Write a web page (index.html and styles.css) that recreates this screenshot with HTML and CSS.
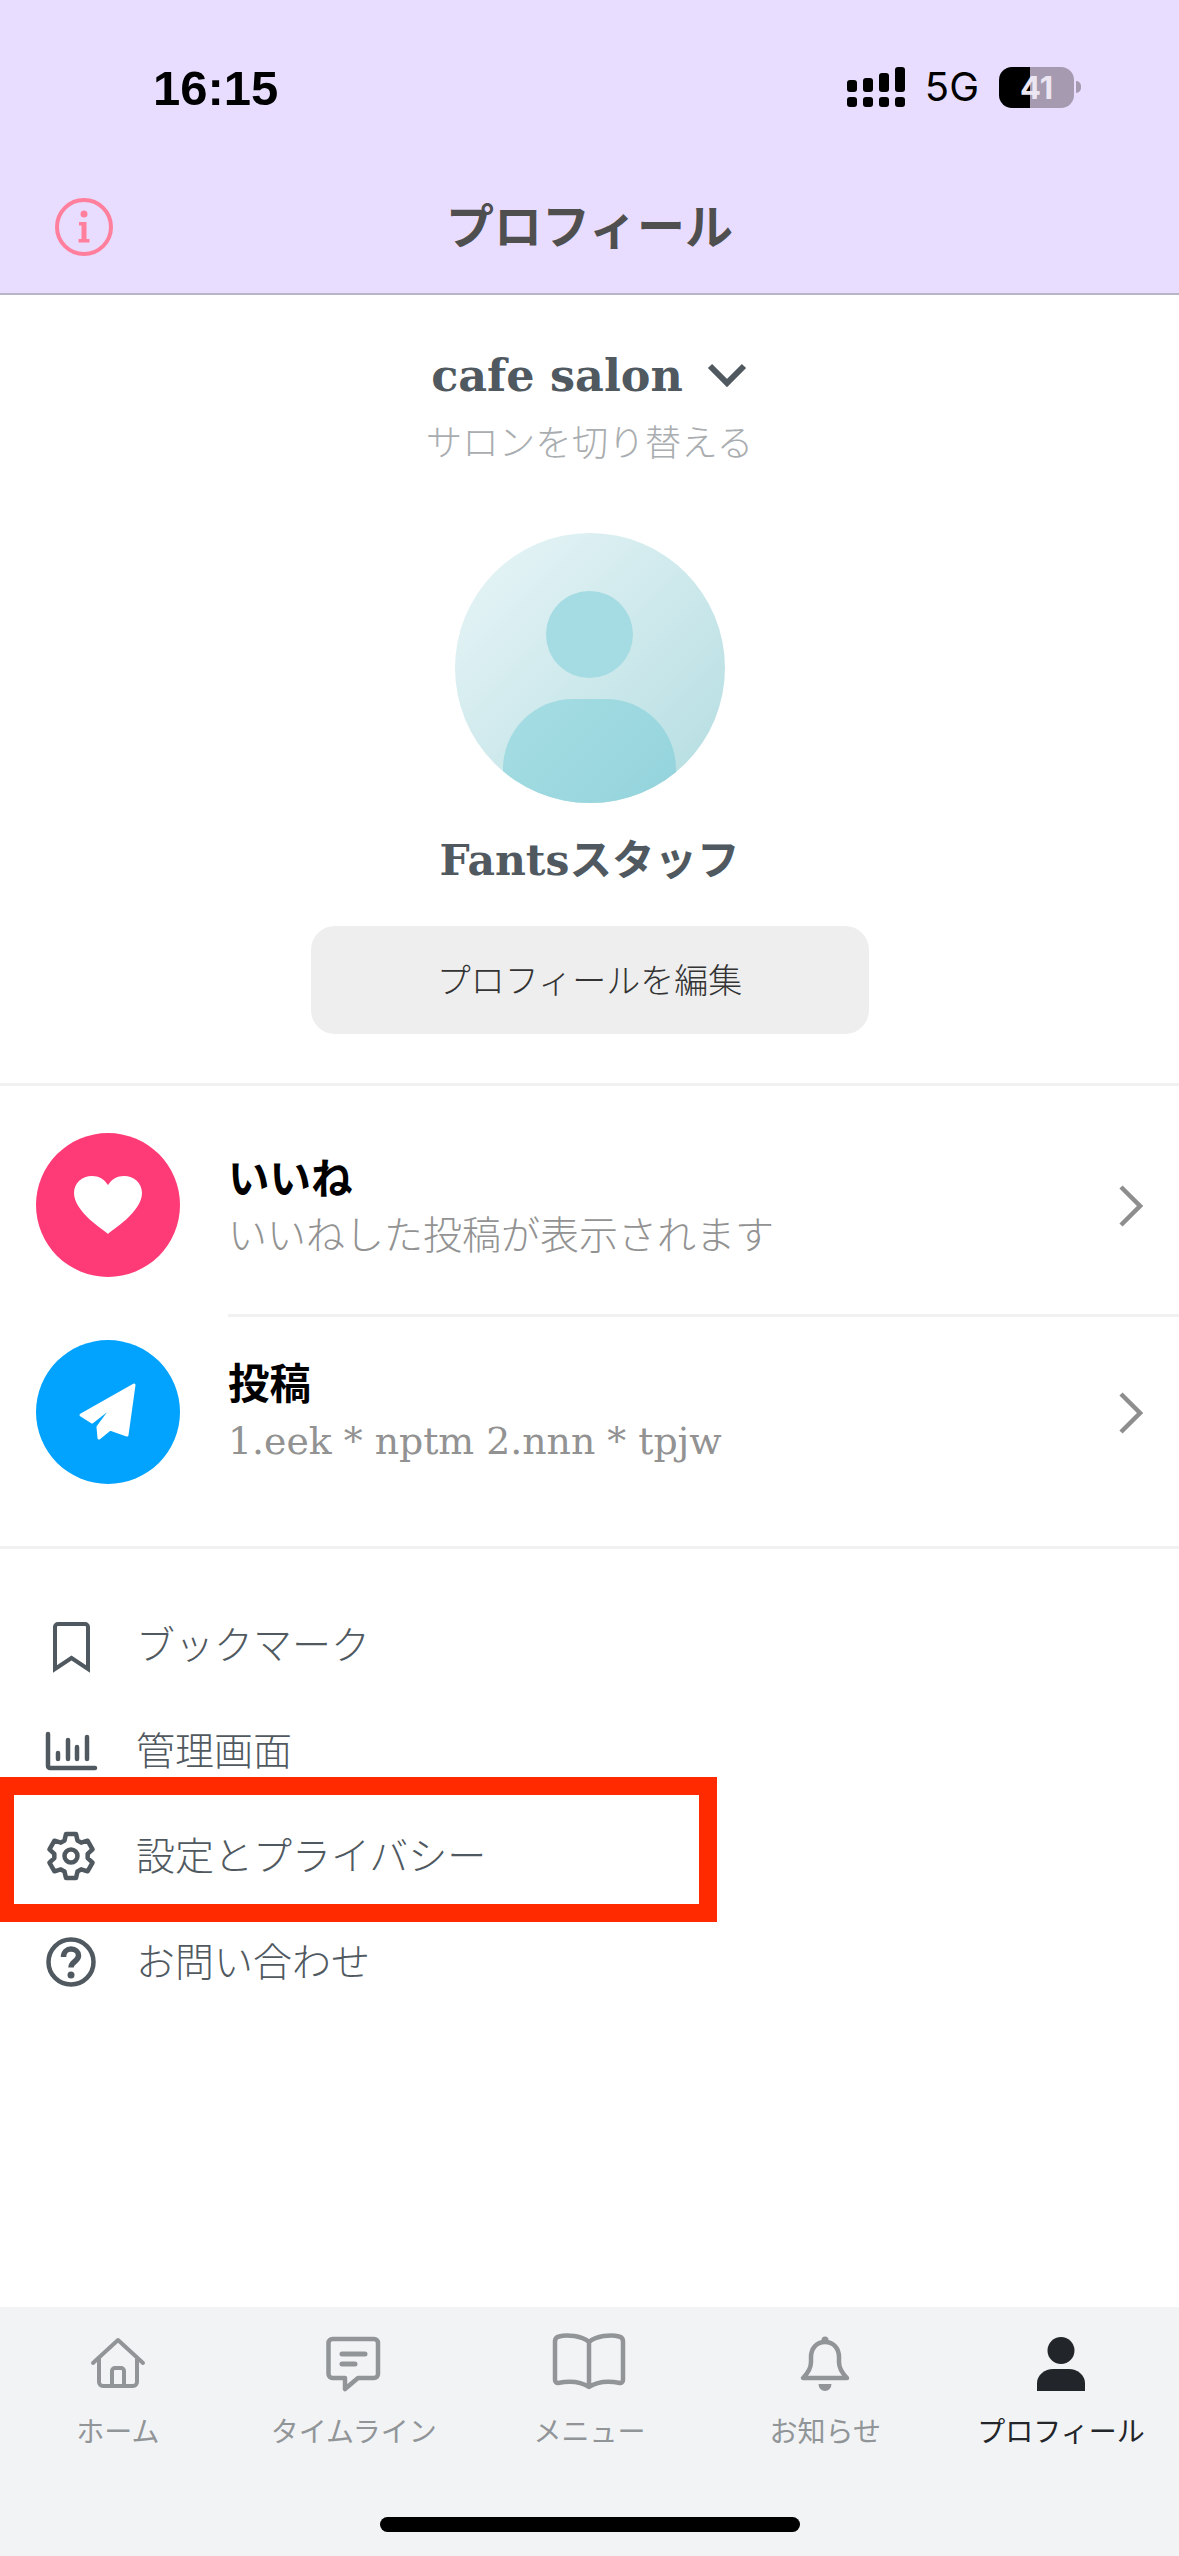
FILE: index.html
```html
<!DOCTYPE html>
<html lang="ja">

<head>
    <meta charset="UTF-8">
    <meta name="viewport" content="width=device-width, initial-scale=1.0">
    <title>プロフィール</title>
    <link rel="stylesheet" href="styles.css">
</head>

<body>
    <div class="page">
        <header class="header">
            <div class="status">
                <span class="time">16:15</span>
                <div class="status-right">
                    <div class="signal">
                        <span class="sig-top"></span><span class="sig-top"></span><span class="sig-top"></span><span class="sig-top"></span>
                        <span></span><span></span><span></span><span></span>
                    </div>
                    <span class="net">5G</span>
                    <div class="battery"><span>41</span></div>
                    <div class="battery-nub"></div>
                </div>
            </div>
            <div class="titlebar">
                <svg class="info" viewBox="0 0 58 60">
                    <circle cx="29" cy="30" r="27" fill="none" stroke="#ff7f9c" stroke-width="4"/>
                    <circle cx="29" cy="17" r="3.5" fill="#ff7f9c"/>
                    <path d="M24 25h7.500v17h3v3.500H23.500v-3.500h3V28.500h-2.500z" fill="#ff7f9c"/>
                </svg>
                <h1>プロフィール</h1>
            </div>
        </header>

        <section class="profile">
            <div class="salon">
                <span>cafe salon</span>
                <svg viewBox="0 0 42 26" class="salon-arrow">
                    <path d="M4 4l17 17L38 4" fill="none" stroke="#50595f" stroke-width="6"/>
                </svg>
            </div>
            <div class="salon-sub">サロンを切り替える</div>
            <div class="avatar">
                <div class="avatar-head"></div>
                <div class="avatar-body"></div>
            </div>
            <div class="name">Fantsスタッフ</div>
            <button type="button" class="edit-btn">プロフィールを編集</button>
        </section>

        <section class="links">
            <div class="link-row">
                <div class="link-icon like">
                    <svg viewBox="0 0 68 58" width="68" height="58">
                        <path d="M34 58C30 54 0 36 0 17 0 7 8 0 18 0c7 0 12 3 16 9 4-6 9-9 16-9 10 0 18 7 18 17 0 19-30 37-34 41z" fill="#fff"/>
                    </svg>
                </div>
                <div class="link-text">
                    <div class="link-title">いいね</div>
                    <div class="link-sub">いいねした投稿が表示されます</div>
                </div>
                <svg class="chevron" viewBox="0 0 24 42"><path d="M2 2l19 19L2 40" fill="none" stroke="#8e8e8e" stroke-width="4.500"/></svg>
            </div>
            <div class="link-divider"></div>
            <div class="link-row">
                <div class="link-icon post">
                    <svg viewBox="0 0 60 60" width="60" height="60">
                        <path d="M56 3 3 33l11 7 23-18-17 23 1 11 11-9 17 6z" fill="#fff" stroke="#fff" stroke-width="3" stroke-linejoin="round"/>
                    </svg>
                </div>
                <div class="link-text">
                    <div class="link-title">投稿</div>
                    <div class="link-sub latin">1.eek * nptm 2.nnn * tpjw</div>
                </div>
                <svg class="chevron" viewBox="0 0 24 42"><path d="M2 2l19 19L2 40" fill="none" stroke="#8e8e8e" stroke-width="4.500"/></svg>
            </div>
        </section>

        <nav class="menu">
            <div class="menu-row">
                <svg class="menu-icon" viewBox="0 0 50 50"><path d="M9 49V7a3 3 0 0 1 3-3h27a3 3 0 0 1 3 3v42L25.500 38z" fill="none" stroke="#50595f" stroke-width="4"/></svg>
                <span>ブックマーク</span>
            </div>
            <div class="menu-row">
                <svg class="menu-icon" viewBox="0 0 50 50">
                    <path d="M2 9v32a2 2 0 0 0 2 2h45" fill="none" stroke="#50595f" stroke-width="4.500" stroke-linecap="round"/>
                    <path d="M12 28v6M22 15v19M31 22v12M41 12v22" fill="none" stroke="#50595f" stroke-width="4.500" stroke-linecap="round"/>
                </svg>
                <span>管理画面</span>
            </div>
            <div class="menu-row marked">
                <svg class="menu-icon" viewBox="0 0 50 50">
                    <path d="M18.500 9.500 20 3H30L31.500 9.500 35.170 11.620 41.550 9.670 46.550 18.330 41.670 22.880V27.120L46.550 31.670 41.550 40.330 35.170 38.380 31.500 40.500 30 47H20L18.500 40.500 14.830 38.380 8.450 40.330 3.450 31.670 8.330 27.120V22.880L3.450 18.330 8.450 9.670 14.830 11.620z" fill="none" stroke="#50595f" stroke-width="4.500" stroke-linejoin="round"/>
                    <circle cx="25" cy="25" r="6.500" fill="none" stroke="#50595f" stroke-width="4.500"/>
                </svg>
                <span>設定とプライバシー</span>
            </div>
            <div class="menu-row">
                <svg class="menu-icon" viewBox="0 0 50 50">
                    <circle cx="25" cy="25" r="22.500" fill="none" stroke="#50595f" stroke-width="4.500"/>
                    <path d="M17.500 20c0-5 3.500-8 7.500-8 4.500 0 7.500 3 7.500 6.500 0 6-7.500 6-7.500 12" fill="none" stroke="#50595f" stroke-width="5.500"/>
                    <circle cx="25" cy="38" r="3.500" fill="#50595f"/>
                </svg>
                <span>お問い合わせ</span>
            </div>
        </nav>

        <footer class="tabbar">
            <div class="tabs">
                <div class="tab">
                    <svg viewBox="0 0 60 60" width="60" height="60">
                        <path d="M5 31 30 8l25 23M11 27v23a4 4 0 0 0 4 4h30a4 4 0 0 0 4-4V27M24 54V39a3 3 0 0 1 3-3h6a3 3 0 0 1 3 3v15" fill="none" stroke="#919598" stroke-width="4" stroke-linecap="round" stroke-linejoin="round"/>
                    </svg>
                    <span>ホーム</span>
                </div>
                <div class="tab">
                    <svg viewBox="0 0 60 60" width="60" height="60">
                        <path d="M4.500 11a4 4 0 0 1 4-4h41.500a4 4 0 0 1 4 4v31a4 4 0 0 1-4 4H34L21 57V46H8.500a4 4 0 0 1-4-4z" fill="none" stroke="#919598" stroke-width="4.500" stroke-linejoin="round"/>
                        <path d="M18 22h23M18 32h13" fill="none" stroke="#919598" stroke-width="5" stroke-linecap="round"/>
                    </svg>
                    <span>タイムライン</span>
                </div>
                <div class="tab">
                    <svg viewBox="0 0 74 60" width="74" height="60">
                        <path d="M37 10C30 4 15 2 7 4.500A5 5 0 0 0 3 9V48a3 3 0 0 0 3 3C16 49 28 49 37 55 46 49 58 49 68 51a3 3 0 0 0 3-3V9A5 5 0 0 0 67 4.500C59 2 44 4 37 10zM37 10V55" fill="none" stroke="#919598" stroke-width="4.500" stroke-linejoin="round"/>
                    </svg>
                    <span>メニュー</span>
                </div>
                <div class="tab">
                    <svg viewBox="0 0 60 60" width="60" height="60">
                        <path d="M30 10C21 10 16 17 16 25V30C16 37 12 42 8 46H52C48 42 44 37 44 30V25C44 17 39 10 30 10z" fill="none" stroke="#919598" stroke-width="4.500" stroke-linejoin="round"/>
                        <circle cx="30" cy="8" r="3.500" fill="#919598"/>
                        <path d="M23.500 52H36.500A6.500 7 0 0 1 23.500 52z" fill="#919598"/>
                    </svg>
                    <span>お知らせ</span>
                </div>
                <div class="tab active">
                    <svg viewBox="0 0 60 60" width="60" height="60">
                        <circle cx="30" cy="18.500" r="13.500" fill="#222529"/>
                        <path d="M6 59v-8C6 43 14 37 22 37h16c8 0 16 6 16 14v8z" fill="#222529"/>
                    </svg>
                    <span>プロフィール</span>
                </div>
            </div>
            <div class="home-bar"></div>
        </footer>
    </div>
</body>

</html>
```

FILE: styles.css
```css
*, *::after {
    box-sizing: border-box;
}

html, body {
    margin: 0;
    padding: 0;
}

body {
    font-family: "Noto Sans CJK JP", "Noto Sans", sans-serif;
    background-color: #fff;
}

.page {
    width: 1179px;
    height: 2556px;
    display: flex;
    flex-direction: column;
    overflow: hidden;
}

/* header */
.header {
    height: 295px;
    background-color: #e8ddff;
    border-bottom: 2px solid #bab5c6;
    flex-shrink: 0;
}

.status {
    height: 172px;
    padding: 60px 98px 0 153px;
    display: flex;
    justify-content: space-between;
}

.time {
    font-family: "Liberation Sans", sans-serif;
    font-size: 49px;
    font-weight: bold;
    line-height: 56px;
    color: #000;
}

.status-right {
    display: flex;
    align-items: flex-start;
    height: 48px;
    padding-top: 7px;
}

.signal {
    display: grid;
    grid-template-columns: repeat(4, 10px);
    grid-template-rows: 25px 10px;
    column-gap: 6px;
    row-gap: 5px;
    align-items: end;
    margin-right: 20px;
}

.signal span {
    display: block;
    width: 10px;
    height: 10px;
    background-color: #000;
    border-radius: 3px;
}

.signal .sig-top:nth-child(1) { height: 12px; }
.signal .sig-top:nth-child(2) { height: 14px; }
.signal .sig-top:nth-child(3) { height: 19px; }
.signal .sig-top:nth-child(4) { height: 25px; }

.net {
    font-family: "Inter", sans-serif;
    font-size: 40px;
    line-height: 40px;
    color: #000;
    margin-right: 20px;
}

.battery {
    width: 75px;
    height: 41px;
    border-radius: 13px;
    background: linear-gradient(to right, #000 41%, #a59aaf 41%);
    color: #ebe6f2;
    font-family: "Inter", sans-serif;
    font-size: 31px;
    font-weight: 700;
    line-height: 41px;
    text-align: center;
}

.battery-nub {
    width: 5px;
    height: 12px;
    margin: 14px 0 0 2px;
    background-color: #a59aaf;
    border-radius: 0 6px 6px 0;
}

.titlebar {
    height: 121px;
    padding-bottom: 20px;
    display: flex;
    align-items: center;
    justify-content: center;
    position: relative;
}

.info {
    position: absolute;
    left: 55px;
    top: 25px;
    width: 58px;
    height: 60px;
}

h1 {
    margin: 0;
    font-size: 48px;
    font-weight: 700;
    color: #4f4f4f;
    line-height: 60px;
}

/* profile top */
.profile {
    display: flex;
    flex-direction: column;
    align-items: center;
    padding: 50px 0 49px;
    border-bottom: 3px solid #f1f1f1;
    flex-shrink: 0;
}

.salon {
    height: 60px;
    display: flex;
    align-items: center;
    gap: 23px;
    font-family: "DejaVu Serif", serif;
    font-weight: bold;
    font-size: 44.500px;
    color: #50595f;
}

.salon-arrow {
    width: 42px;
    height: 26px;
}

.salon-sub {
    margin-top: 11px;
    margin-bottom: 3px;
    line-height: 50px;
    font-size: 36.500px;
    font-weight: 300;
    color: #a9adb0;
}

.avatar {
    margin-top: 64px;
    width: 270px;
    height: 270px;
    border-radius: 50%;
    background: linear-gradient(135deg, #e4f3f5 10%, #b8dfe3 90%);
    position: relative;
    overflow: hidden;
}

.avatar-head {
    position: absolute;
    left: 91px;
    top: 58px;
    width: 87px;
    height: 87px;
    border-radius: 50%;
    background: #a5dce3;
}

.avatar-body {
    position: absolute;
    left: 48px;
    top: 166px;
    width: 173px;
    height: 120px;
    border-radius: 70px 70px 0 0;
    background: linear-gradient(135deg, #a6dde3, #93d3dc);
}

.name {
    margin-top: 29px;
    line-height: 56px;
    font-family: "DejaVu Serif", "Noto Sans CJK JP", serif;
    font-weight: bold;
    font-size: 42.500px;
    color: #50595f;
}

.edit-btn {
    margin-top: 38px;
    width: 558px;
    height: 108px;
    padding: 0 0 3px;
    border: none;
    border-radius: 24px;
    background-color: #eeeeee;
    font-family: inherit;
    font-size: 34px;
    font-weight: 300;
    color: #333;
}

/* likes + posts */
.links {
    padding: 47px 0 62px;
    border-bottom: 3px solid #f1f1f1;
    flex-shrink: 0;
}

.link-row {
    height: 144px;
    display: flex;
    align-items: center;
    padding: 0 36px;
}

.link-icon {
    width: 144px;
    height: 144px;
    border-radius: 50%;
    display: flex;
    align-items: center;
    justify-content: center;
    flex-shrink: 0;
}

.like { background-color: #ff3b77; }
.post { background-color: #02a3ff; }

.link-text {
    flex: 1;
    margin-left: 48px;
    padding-bottom: 3px;
}

.link-title {
    font-size: 41.500px;
    font-weight: 700;
    line-height: 56px;
    color: #000;
}

.link-sub {
    font-size: 39px;
    font-weight: 300;
    line-height: 56px;
    color: #929292;
}

.link-sub.latin {
    font-family: "DejaVu Serif", serif;
    font-size: 37.800px;
    padding-top: 4px;
}

.chevron {
    width: 24px;
    height: 42px;
    margin-top: 2px;
}

.link-divider {
    height: 3px;
    margin: 37px 0 23px 228px;
    background-color: #f1f1f1;
}

/* menu */
.menu {
    padding-top: 43px;
    flex: 1;
}

.menu-row {
    height: 105.600px;
    display: flex;
    align-items: center;
    padding-left: 46px;
    font-size: 39px;
    font-weight: 300;
    color: #50595f;
    position: relative;
}

.menu-row span {
    padding-bottom: 5px;
}

.menu-icon {
    width: 50px;
    height: 50px;
    margin-right: 40px;
    flex-shrink: 0;
    overflow: visible;
}

.marked::after {
    content: "";
    position: absolute;
    left: 0;
    top: -26px;
    bottom: -13px;
    width: 717px;
    border: 18px solid #ff2a00;
    border-left-width: 14px;
}

/* bottom tabs */
.tabbar {
    height: 249px;
    background-color: #f2f3f5;
    flex-shrink: 0;
}

.tabs {
    display: grid;
    grid-template-columns: repeat(5, 1fr);
    padding-top: 25px;
}

.tab {
    display: flex;
    flex-direction: column;
    align-items: center;
    font-size: 28px;
    line-height: 40px;
    color: #919598;
}

.tab svg {
    margin-bottom: 18px;
}

.tab.active {
    color: #222529;
}

.home-bar {
    width: 420px;
    height: 15px;
    margin: 67px auto 0;
    background-color: #000;
    border-radius: 8px;
}
```
